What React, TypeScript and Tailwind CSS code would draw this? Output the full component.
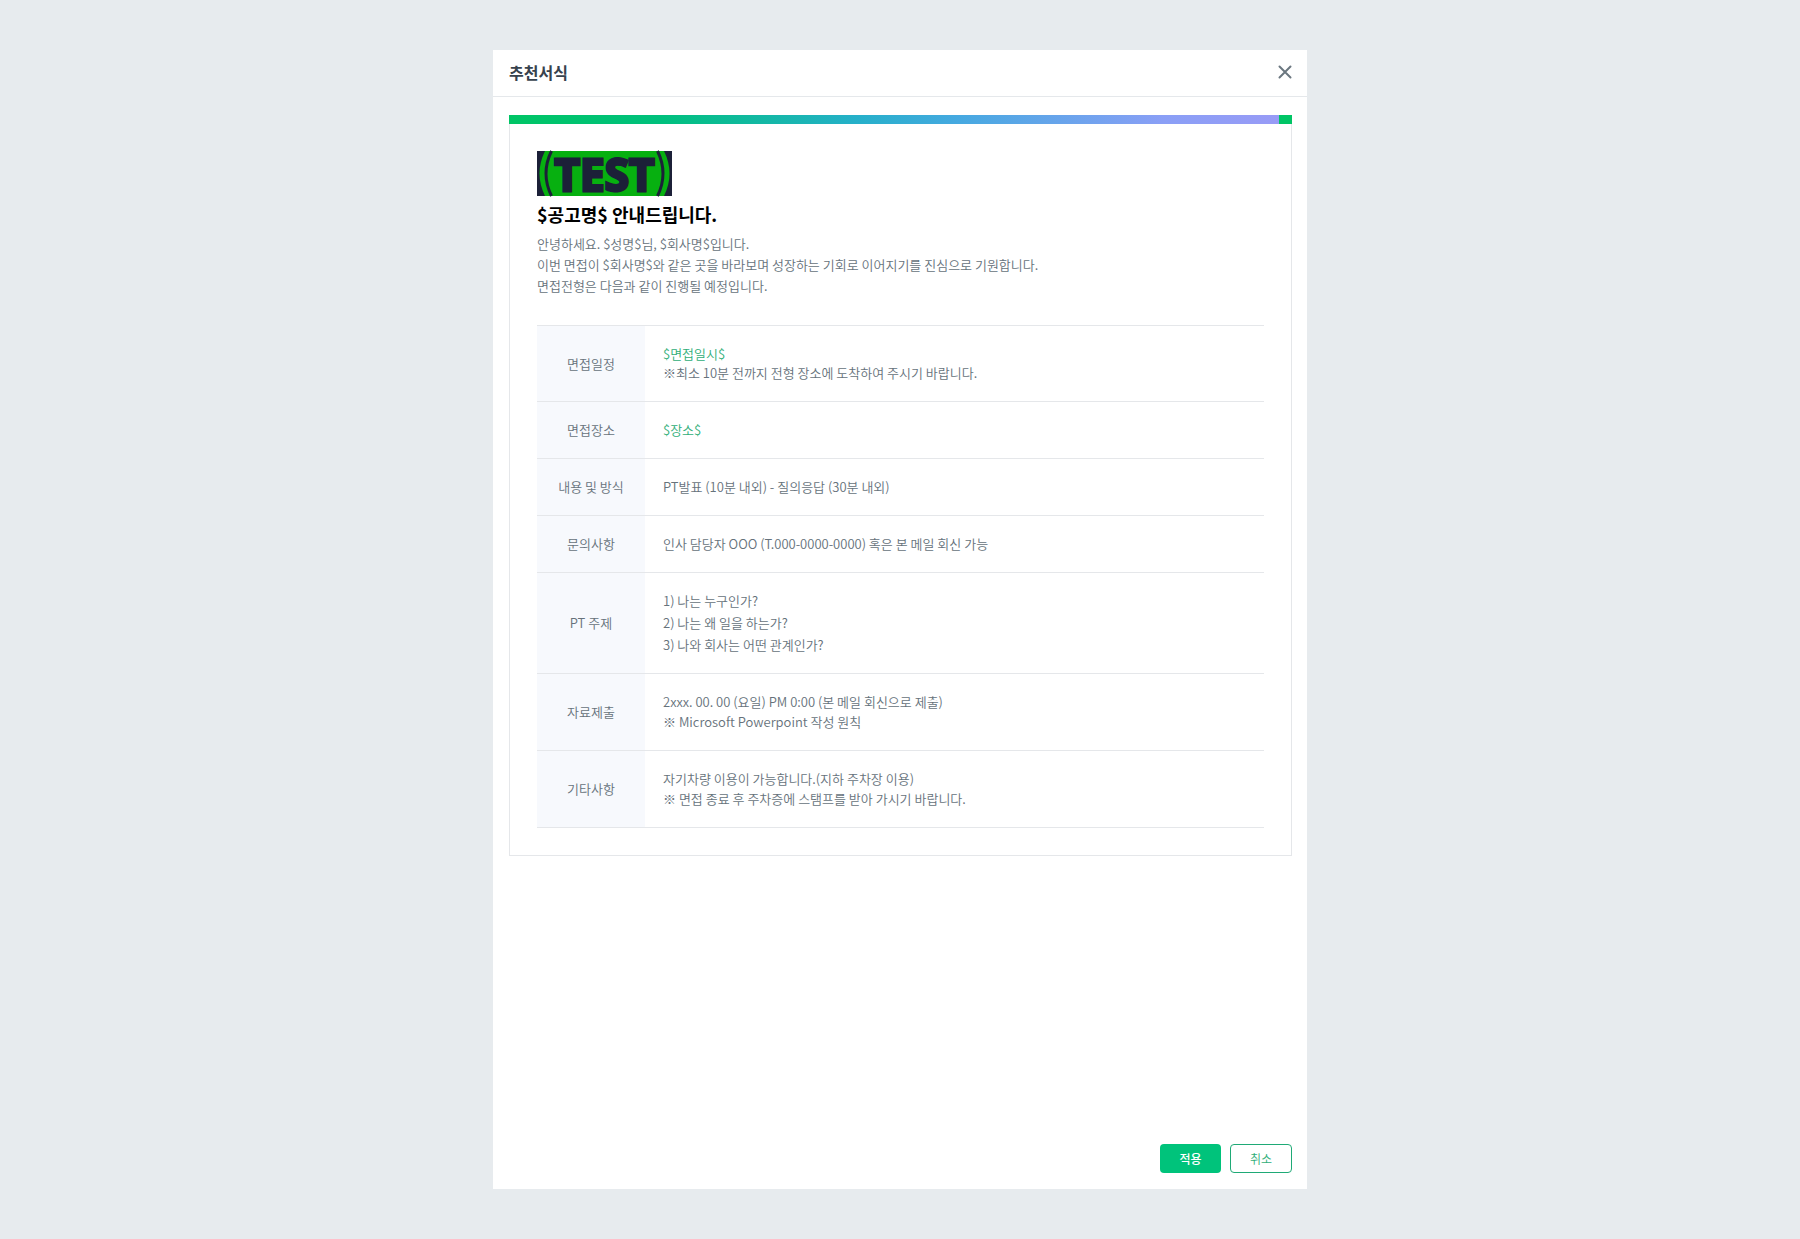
import React from 'react';

interface Row {
  label: string;
  height: string;
  leading: string;
  lines: { text: string; accent?: boolean }[];
}

const rows: Row[] = [
  {
    label: '면접일정',
    height: 'h-[76px]',
    leading: 'pb-0.5 leading-[19px]',
    lines: [{ text: '$면접일시$', accent: true }, { text: '※최소 10분 전까지 전형 장소에 도착하여 주시기 바랍니다.' }],
  },
  { label: '면접장소', height: 'h-[57px]', leading: 'leading-5', lines: [{ text: '$장소$', accent: true }] },
  { label: '내용 및 방식', height: 'h-[57px]', leading: 'leading-5', lines: [{ text: 'PT발표 (10분 내외) - 질의응답 (30분 내외)' }] },
  { label: '문의사항', height: 'h-[57px]', leading: 'leading-5', lines: [{ text: '인사 담당자 OOO (T.000-0000-0000) 혹은 본 메일 회신 가능' }] },
  {
    label: 'PT 주제',
    height: 'h-[101px]',
    leading: 'leading-[22px]',
    lines: [{ text: '1) 나는 누구인가?' }, { text: '2) 나는 왜 일을 하는가?' }, { text: '3) 나와 회사는 어떤 관계인가?' }],
  },
  {
    label: '자료제출',
    height: 'h-[77px]',
    leading: 'leading-5',
    lines: [{ text: '2xxx. 00. 00 (요일) PM 0:00 (본 메일 회신으로 제출)' }, { text: '※ Microsoft Powerpoint 작성 원칙' }],
  },
  {
    label: '기타사항',
    height: 'h-[77px]',
    leading: 'leading-5',
    lines: [{ text: '자기차량 이용이 가능합니다.(지하 주차장 이용)' }, { text: '※ 면접 종료 후 주차증에 스탬프를 받아 가시기 바랍니다.' }],
  },
];

const Logo: React.FC = () => (
  <svg width="135" height="45" viewBox="0 0 135 45" role="img" aria-label="TEST" className="block overflow-visible">
    <rect width="135" height="45" fill="#1c2038" />
    {/* green badge, clipped by the top and bottom edges */}
    <path d="M8 0H127Q138 22.5 127 45H8Q-3 22.5 8 0Z" fill="#07b010" />
    <path d="M14.5 0Q3.5 22.5 14.5 45M120.5 0Q131.5 22.5 120.5 45" fill="none" stroke="#1c2038" strokeWidth="3" />
    <text
      x="67.5"
      y="40"
      textAnchor="middle"
      fontSize="44"
      fontWeight="700"
      fill="#1c2038"
      stroke="#1c2038"
      strokeWidth="3"
      fontFamily="'Open Sans', 'Noto Sans', sans-serif"
    >
      TEST
    </text>
  </svg>
);

const App: React.FC = () => {
  return (
    <div className="flex min-h-screen justify-center bg-[#e7ebee] py-[50px] font-['Noto_Sans_CJK_KR',sans-serif] text-[13px] font-[350] text-[#66727b]">
      <div role="dialog" aria-labelledby="dialog-title" className="flex w-full max-w-[814px] flex-col bg-white">
        <header className="flex h-[47px] items-center justify-between border-b border-[#e5e8eb] pr-3.5 pb-0.5 pl-4">
          <h1 id="dialog-title" className="text-base leading-6 font-bold text-[#37424d]">
            추천서식
          </h1>
          <button type="button" aria-label="닫기" className="p-px">
            <svg width="14" height="14" viewBox="0 0 14 14" fill="none" stroke="#6b7780" strokeWidth="2" strokeLinecap="round">
              <path d="M1.5 1.5l11 11M12.5 1.5l-11 11" />
            </svg>
          </button>
        </header>

        <main className="flex-1 pt-[18px] pr-[15px] pl-4">
          <div className="flex h-[9px] bg-[#00c565]">
            <div className="mr-[13px] flex-1 bg-[linear-gradient(90deg,#00c565_0%,#00c07d_20%,#25b0c9_45%,#45a9e0_58%,#8a9ff6_85%,#989bf6_100%)]" />
          </div>

          <section className="border border-t-0 border-[#e5e7ea] px-[27px] pt-[27px] pb-[27px]">
            <Logo />
            <h2 className="mt-[5px] text-lg leading-[27px] font-bold text-black">$공고명$ 안내드립니다.</h2>
            <p className="mt-[5px] leading-[21px]">
              안녕하세요. $성명$님, $회사명$입니다.
              <br />
              이번 면접이 $회사명$와 같은 곳을 바라보며 성장하는 기회로 이어지기를 진심으로 기원합니다.
              <br />
              면접전형은 다음과 같이 진행될 예정입니다.
            </p>

            <table className="mt-[29px] w-full border-collapse border-t border-[#e5e7ea]">
              <tbody>
                {rows.map((row) => (
                  <tr key={row.label} className="border-b border-[#e5e7ea]">
                    <th scope="row" className={`w-[108px] bg-[#f7f9fd] font-[350] ${row.height}`}>
                      {row.label}
                    </th>
                    <td className={`pl-[18px] ${row.leading}`}>
                      {row.lines.map((line) => (
                        <div key={line.text} className={line.accent ? 'text-[#2fae78]' : undefined}>
                          {line.text}
                        </div>
                      ))}
                    </td>
                  </tr>
                ))}
              </tbody>
            </table>
          </section>
        </main>

        <footer className="flex justify-end gap-[9px] pt-4 pr-[15px] pb-4 text-[12px] leading-5">
          <button type="button" className="h-[29px] w-[61px] rounded bg-[#00c37b] font-medium text-white">
            적용
          </button>
          <button type="button" className="h-[29px] w-[62px] rounded border border-[#1faa76] text-[#2fae78]">
            취소
          </button>
        </footer>
      </div>
    </div>
  );
};

export default App;
